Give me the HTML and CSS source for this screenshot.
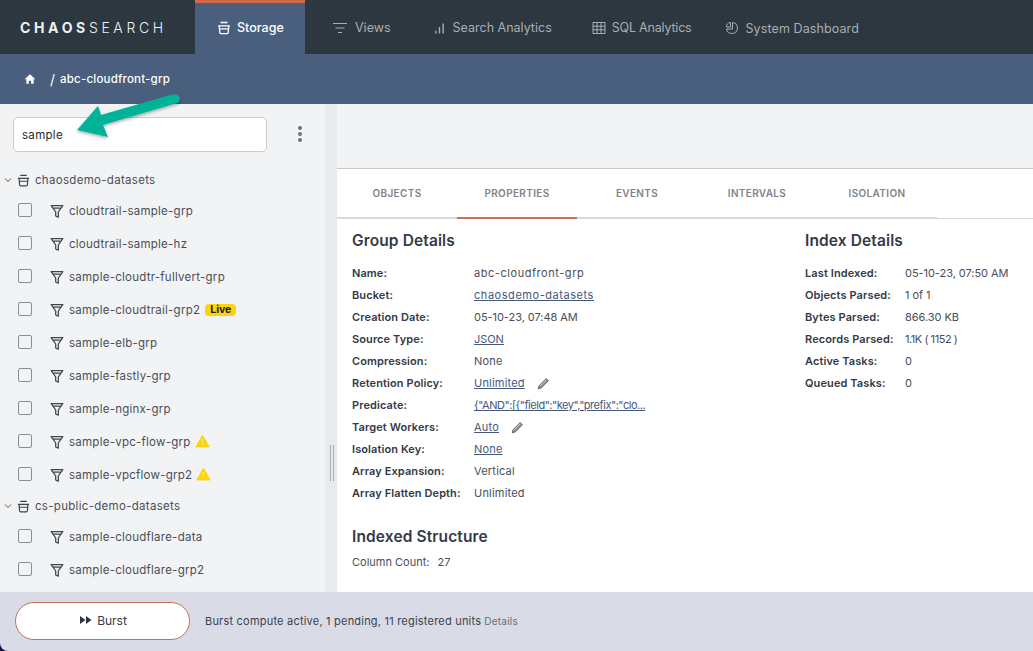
FILE: index.html
```html
<!DOCTYPE html>
<html lang="en">
<head>
<meta charset="utf-8">
<title>CHAOSSEARCH Storage</title>
<link rel="stylesheet" href="styles.css">
</head>
<body>
<svg class="sprite" width="0" height="0" aria-hidden="true">
  <symbol id="basket" viewBox="0 0 14 14"><path d="M3.500 1.500h7M1 4.800h12M2.200 4.800l.6 6.800c.1.700.5 1.100 1.200 1.100h6c.7 0 1.100-.4 1.200-1.100l.6-6.800M2.200 7.800h9.600" fill="none" stroke="currentColor" stroke-width="1.300"/></symbol>
  <symbol id="funnel" viewBox="0 0 14 14"><path d="M1.200 1.600h11.600L8.300 8v5.200L5.700 12V8zM3 4.200h8" fill="none" stroke="currentColor" stroke-width="1.250" stroke-linejoin="round"/></symbol>
  <symbol id="warn" viewBox="0 0 16 14"><path d="M8 .8l7.200 12.500H.8z" fill="#fbd40f" stroke="#fbd40f" stroke-linejoin="round"/><path d="M8 5.200v3.600M8 10v1.300" stroke="#fdeb8e" stroke-width="1.300"/></symbol>
  <symbol id="pencil" viewBox="0 0 14 14"><path d="M1.300 12.700l.8-3.200 7.800-7.800 2.400 2.400-7.800 7.800z" fill="#8d9097" stroke="#55585f" stroke-width=".9" stroke-linejoin="round"/><path d="M3.200 9.700l6.600-6.600" stroke="#e9e9ec" stroke-width=".8"/></symbol>
</svg>
<div class="app">
  <header class="topbar">
    <div class="logo"><b>CHAOS</b>SEARCH</div>
    <nav class="nav">
      <a class="nav-item active"><svg class="nav-icon"><use href="#basket"/></svg>Storage</a>
      <a class="nav-item views"><svg class="nav-icon" viewBox="0 0 14 14"><path d="M0 2.500h14M2.500 7h9M5 11.500h4" stroke="currentColor" stroke-width="1.200"/></svg>Views</a>
      <a class="nav-item search"><svg class="nav-icon small" viewBox="0 0 12 14"><path d="M2 13V10M6 13V6M10 13V2" stroke="currentColor" stroke-width="1.500"/></svg>Search Analytics</a>
      <a class="nav-item sql"><svg class="nav-icon" viewBox="0 0 14 14"><path d="M1 1.500h12v11H1zM1 5.200h12M1 8.800h12M5 1.500v11M9 1.500v11" fill="none" stroke="currentColor" stroke-width="1"/></svg>SQL Analytics</a>
      <a class="nav-item system"><svg class="nav-icon" viewBox="0 0 14 14"><path d="M7.500 1.500a5.500 5.500 0 1 1-6 6.500h6zM1.500 6a4.500 4.500 0 0 1 4-4.500V6z" fill="none" stroke="currentColor" stroke-width="1"/></svg>System Dashboard</a>
    </nav>
  </header>
  <div class="crumbs">
    <svg class="home" viewBox="0 0 14 14"><path d="M7 1.500L.8 7.200h1.900V12.500h3V9h2.600v3.500h3V7.200h1.900z" fill="#fff"/></svg>
    <span class="slash">/</span><span class="crumb">abc-cloudfront-grp</span>
  </div>
  <main class="body">
    <aside class="side">
      <div class="searchrow">
        <div class="searchbox">sample</div>
        <div class="kebab"><i></i><i></i><i></i></div>
      </div>
      <div class="tree">
        <div class="bucket"><svg class="chev" viewBox="0 0 8 6"><path d="M1 1.500l3 3 3-3" fill="none" stroke="currentColor" stroke-width="1"/></svg><svg class="bucket-icon"><use href="#basket"/></svg>chaosdemo-datasets</div>
        <div class="row"><span class="check"></span><svg class="funnel"><use href="#funnel"/></svg>cloudtrail-sample-grp</div>
        <div class="row"><span class="check"></span><svg class="funnel"><use href="#funnel"/></svg>cloudtrail-sample-hz</div>
        <div class="row"><span class="check"></span><svg class="funnel"><use href="#funnel"/></svg>sample-cloudtr-fullvert-grp</div>
        <div class="row"><span class="check"></span><svg class="funnel"><use href="#funnel"/></svg>sample-cloudtrail-grp2<span class="live">Live</span></div>
        <div class="row"><span class="check"></span><svg class="funnel"><use href="#funnel"/></svg>sample-elb-grp</div>
        <div class="row"><span class="check"></span><svg class="funnel"><use href="#funnel"/></svg>sample-fastly-grp</div>
        <div class="row"><span class="check"></span><svg class="funnel"><use href="#funnel"/></svg>sample-nginx-grp</div>
        <div class="row"><span class="check"></span><svg class="funnel"><use href="#funnel"/></svg>sample-vpc-flow-grp<svg class="warn"><use href="#warn"/></svg></div>
        <div class="row"><span class="check"></span><svg class="funnel"><use href="#funnel"/></svg>sample-vpcflow-grp2<svg class="warn"><use href="#warn"/></svg></div>
        <div class="bucket"><svg class="chev" viewBox="0 0 8 6"><path d="M1 1.500l3 3 3-3" fill="none" stroke="currentColor" stroke-width="1"/></svg><svg class="bucket-icon"><use href="#basket"/></svg>cs-public-demo-datasets</div>
        <div class="row"><span class="check"></span><svg class="funnel"><use href="#funnel"/></svg>sample-cloudflare-data</div>
        <div class="row"><span class="check"></span><svg class="funnel"><use href="#funnel"/></svg>sample-cloudflare-grp2</div>
      </div>
    </aside>
    <div class="splitter"><span class="grip"></span></div>
    <section class="content">
      <div class="band"></div>
      <div class="tabs">
        <a class="tab">OBJECTS</a><a class="tab on">PROPERTIES</a><a class="tab">EVENTS</a><a class="tab">INTERVALS</a><a class="tab">ISOLATION</a>
      </div>
      <div class="details">
        <div class="col-group">
          <h2>Group Details</h2>
          <dl class="kv">
            <dt>Name:</dt><dd class="wide">abc-cloudfront-grp</dd>
            <dt>Bucket:</dt><dd class="wide"><a>chaosdemo-datasets</a></dd>
            <dt>Creation Date:</dt><dd class="num">05-10-23, 07:48 AM</dd>
            <dt>Source Type:</dt><dd class="num"><a>JSON</a></dd>
            <dt>Compression:</dt><dd>None</dd>
            <dt>Retention Policy:</dt><dd><a>Unlimited</a><svg class="pencil"><use href="#pencil"/></svg></dd>
            <dt>Predicate:</dt><dd class="tight"><a>{"AND":[{"field":"key","prefix":"clo...</a></dd>
            <dt>Target Workers:</dt><dd><a>Auto</a><svg class="pencil"><use href="#pencil"/></svg></dd>
            <dt>Isolation Key:</dt><dd><a>None</a></dd>
            <dt>Array Expansion:</dt><dd>Vertical</dd>
            <dt>Array Flatten Depth:</dt><dd>Unlimited</dd>
          </dl>
          <h2 class="structure">Indexed Structure</h2>
          <p class="count">Column Count:<span>27</span></p>
        </div>
        <div class="col-index">
          <h2>Index Details</h2>
          <dl class="kv narrow">
            <dt>Last Indexed:</dt><dd class="num">05-10-23, 07:50 AM</dd>
            <dt>Objects Parsed:</dt><dd class="num">1 of 1</dd>
            <dt>Bytes Parsed:</dt><dd class="num">866.30 KB</dd>
            <dt>Records Parsed:</dt><dd class="tight">1.1K ( 1152 )</dd>
            <dt>Active Tasks:</dt><dd>0</dd>
            <dt>Queued Tasks:</dt><dd>0</dd>
          </dl>
        </div>
      </div>
    </section>
  </main>
  <footer class="foot">
    <button class="burst"><svg class="ff" viewBox="0 0 12 8"><path d="M0 0l5.500 4L0 8zM6 0l5.500 4L6 8z" fill="#2d3540"/></svg>Burst</button>
    <span class="status">Burst compute active, 1 pending, 11 registered units</span><span class="more">Details</span>
  </footer>
  <svg class="arrow" viewBox="0 0 140 60" aria-hidden="true">
    <defs><filter id="sh" x="-20%" y="-30%" width="140%" height="170%"><feDropShadow dx="0" dy="1.500" stdDeviation="1.500" flood-color="#000" flood-opacity=".35"/></filter></defs>
    <path d="M114 6.500a4.500 4.500 0 0 1 3 8.500L43 37l5 12-31-7 21-24 3 9L111 6.700z" fill="#00b398" filter="url(#sh)"/>
  </svg>
</div>
</body>
</html>
```
FILE: styles.css
```css
* { box-sizing: border-box; }
html, body { margin: 0; height: 100%; }
body { font-family: Inter, "Liberation Sans", sans-serif; font-size: 11.5px; color: #343a46; background: #fff; overflow: hidden; }
.sprite { position: absolute; }
.app { position: relative; width: 1033px; height: 651px; display: flex; flex-direction: column; overflow: hidden; background: #1c1248; }

.topbar { height: 54px; flex: none; background: #2c3740; display: flex; }
.logo { width: 195px; padding: 20px 0 0 20px; color: #eef0f2; font-size: 14px; line-height: 16px; letter-spacing: 3.65px; font-weight: 300; white-space: nowrap; }
.logo b { font-weight: 700; }
.nav { display: flex; }
.nav-item { display: flex; align-items: center; color: #a9aeb3; font-size: 12.5px; padding-top: 1px; white-space: nowrap; }
.nav-item.active { width: 110px; background: #4a5e7d; border-top: 3px solid #d0694b; color: #fff; font-weight: 500; padding-left: 22px; padding-top: 0; padding-bottom: 2px; }
.nav-item.views { margin-left: 28px; }
.nav-item.search { margin-left: 43px; }
.nav-item.sql { margin-left: 40px; letter-spacing: -.2px; }
.nav-item.system { margin-left: 34px; padding-top: 2px; letter-spacing: .1px; }
.nav-icon { width: 14px; height: 14px; margin-right: 6px; flex: none; }
.nav-item.views .nav-icon { margin-right: 8px; }
.nav-icon.small { width: 11px; margin-right: 8px; }

.crumbs { height: 50px; flex: none; background: #4a5e7d; display: flex; align-items: center; padding-left: 24px; color: #fff; }
.home { width: 12px; height: 12px; }
.slash { margin-left: 14px; font-size: 14px; }
.crumb { margin-left: 5px; font-size: 11.5px; font-weight: 500; letter-spacing: .2px; }

.body { flex: 1; display: flex; min-height: 0; }
.side { width: 325px; flex: none; background: #f2f3f5; overflow: hidden; }
.searchrow { display: flex; align-items: center; padding: 13px 0 0 13px; }
.searchbox { width: 254px; height: 35px; background: #fff; border: 1px solid #c9ccd2; border-radius: 5px; display: flex; align-items: center; padding-left: 8px; color: #25292f; font-size: 11.5px; letter-spacing: .3px; }
.kebab { margin-left: 31px; display: flex; flex-direction: column; gap: 2px; margin-top: -1px; }
.kebab i { width: 4px; height: 4px; border-radius: 50%; background: #6d7178; }

.tree { padding-top: 18px; color: #494e59; }
.bucket { height: 20px; display: flex; align-items: center; padding-left: 4px; margin: 4.5px 0 4.5px; letter-spacing: .3px; white-space: nowrap; }
.bucket:first-child { margin-top: 0; }
.chev { width: 8px; height: 6px; margin-right: 5px; color: #555; }
.bucket-icon { width: 13px; height: 13px; margin-right: 5px; color: #3e434e; }
.row { height: 33px; display: flex; align-items: center; padding-left: 18px; white-space: nowrap; letter-spacing: .25px; }
.check { width: 14px; height: 14px; border: 1.6px solid #8b8e94; border-radius: 2px; margin-right: 18px; flex: none; margin-top: -2px; }
.funnel { width: 14px; height: 14px; margin-right: 5px; flex: none; color: #3e434e; }
.live { margin-left: 5px; background: #fbd40f; color: #1e2126; font-size: 10.5px; font-weight: 700; border-radius: 4px; padding: 0 5px; line-height: 12px; letter-spacing: 0; }
.warn { width: 15px; height: 14px; margin-left: 4px; margin-top: -2px; }

.splitter { width: 12px; flex: none; background: #e9eaee; position: relative; }
.grip { position: absolute; left: 5px; top: 341px; width: 4px; height: 36px; border-left: 1px solid #a9acb2; border-right: 1px solid #a9acb2; }

.content { flex: 1; display: flex; flex-direction: column; background: #fff; min-width: 0; }
.band { height: 65px; background: #f2f3f5; border-bottom: 1px solid #c9cbce; flex: none; }
.tabs { height: 50px; display: flex; flex: none; border-bottom: 1px solid #d4d5d8; }
.tab { width: 120px; display: flex; align-items: center; justify-content: center; color: #7f8388; font-size: 10px; font-weight: 600; letter-spacing: .35px; padding-bottom: 1px; border-bottom: 2px solid #d9dadd; height: 50px; }
.tab.on { border-bottom-color: #c1745c; }

.details { flex: 1; display: flex; padding-left: 15px; min-height: 0; }
.col-group { width: 453px; }
h2 { margin: 0; font-size: 15.5px; line-height: 20px; font-weight: 600; color: #343a46; padding-top: 12px; height: 32px; white-space: nowrap; letter-spacing: .12px; }
.kv { margin: 11px 0 0; display: grid; grid-template-columns: 122px 1fr; grid-auto-rows: 22px; align-items: center; }
.kv.narrow { grid-template-columns: 100px 1fr; }
dt { font-weight: 600; color: #343a46; font-size: 11px; white-space: nowrap; letter-spacing: .1px; }
dd { margin: 0; display: flex; align-items: center; color: #494e59; font-size: 11px; white-space: nowrap; letter-spacing: .2px; }
dd.wide { letter-spacing: .55px; }
dd.num { letter-spacing: -.05px; }
dd.tight { letter-spacing: -.45px; }
dd a { color: #45587a; text-decoration: underline; }
.pencil { width: 13px; height: 13px; margin-left: 12px; }
.structure { margin-top: 11px; }
.count { margin: 7px 0 0; font-size: 11px; line-height: 16px; color: #494e59; }
.count span { margin-left: 8px; }

.foot { height: 59px; flex: none; background: #d9dce6; display: flex; align-items: center; padding-left: 15px; color: #3c424d; border-bottom-left-radius: 8px; }
.burst { width: 175px; height: 38px; background: #fff; border: 1px solid #c1745c; border-radius: 19px; font: inherit; font-size: 12px; color: #343a46; display: flex; align-items: center; justify-content: center; margin-right: 15px; margin-top: -1px; padding: 0 0 2px 2px; }
.ff { width: 12px; height: 8px; margin-right: 5px; }
.status { font-size: 11px; letter-spacing: .21px; margin-top: -2px; }
.more { margin-left: 3px; font-size: 10px; letter-spacing: .25px; color: #6b6f78; margin-top: -2px; }

.arrow { position: absolute; left: 60px; top: 88px; width: 140px; height: 60px; }
```
